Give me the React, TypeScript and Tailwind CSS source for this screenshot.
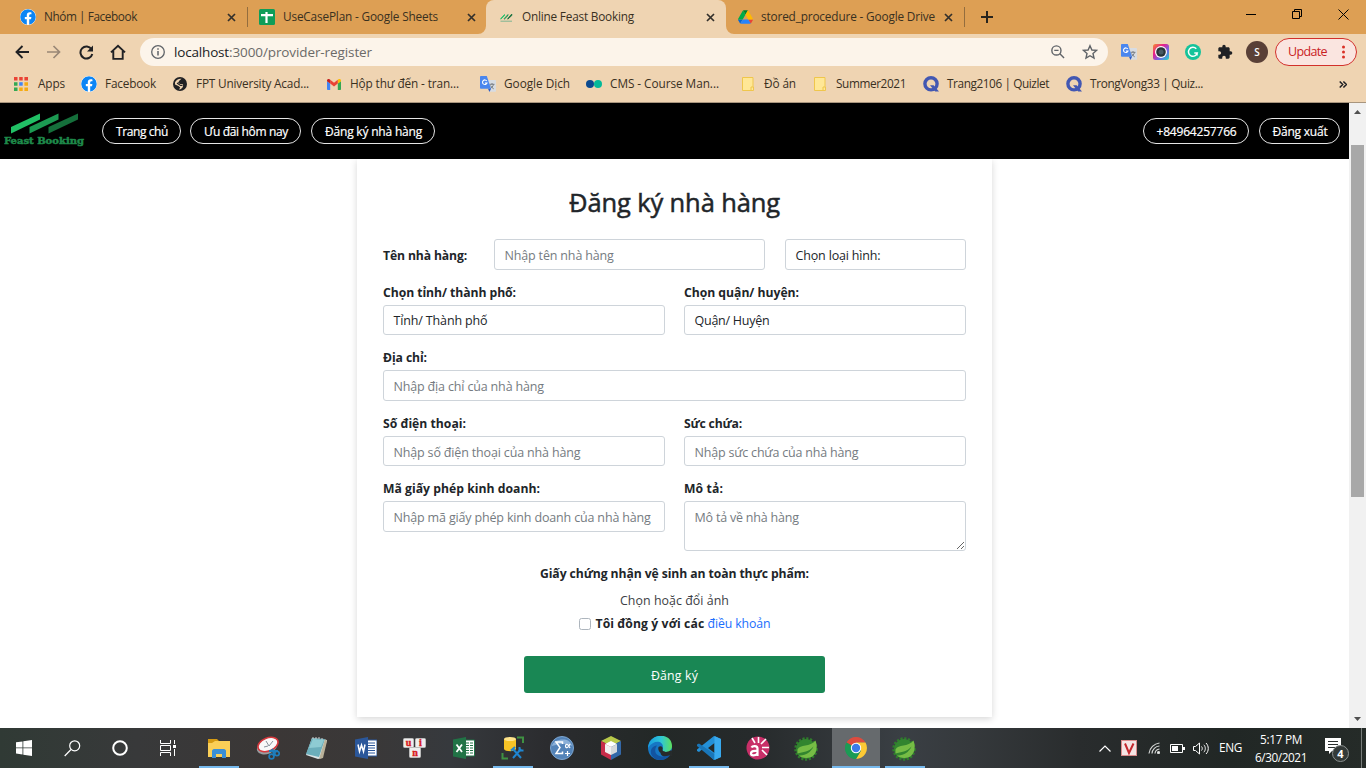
import React, { useLayoutEffect, useRef, useState } from "react";
import { FaFacebook } from "react-icons/fa";

/* Text run whose tracking is adjusted so that it occupies a given width. */
function Fit({ w, className = "", children }: { w: number; className?: string; children: string }) {
  const ref = useRef<HTMLSpanElement>(null);
  const [spacing, setSpacing] = useState(0);
  useLayoutEffect(() => {
    if (ref.current) {
      const natural = ref.current.getBoundingClientRect().width;
      setSpacing((w - natural) / children.length);
    }
  }, [w, children]);
  return (
    <span ref={ref} className={"inline-block shrink-0 whitespace-pre " + className} style={{ letterSpacing: spacing }}>
      {children}
    </span>
  );
}

/* ---------- small icons ---------- */
const FbIcon = () => (
  <span className="flex size-4 items-center justify-center overflow-hidden rounded-full bg-white">
    <FaFacebook className="size-4 text-[#0c85f5]" />
  </span>
);
const SheetsIcon = () => (
  <svg className="size-4" viewBox="0 0 16 16">
    <rect width="16" height="16" rx="1.5" fill="#0f9d58" />
    <path d="M2 5h12v2.2H8.6V14H6.4V7.200H2zM6.400 3h2.200v3H6.400z" fill="#fff" />
  </svg>
);
const FeastIcon = () => (
  <svg className="h-[9px] w-[13px]" viewBox="0 0 13 9">
    <path d="M.8 5.500L4.500 1.500v1L.8 6.200z" fill="#22c069" stroke="#22c069" strokeWidth=".8" />
    <path d="M4.300 5.500l3.700-4v1L4.300 6.200z" fill="#1b9853" stroke="#1b9853" strokeWidth=".8" />
    <path d="M7.800 5.500l4-4.500v1.500l-4 3.700z" fill="#14703e" stroke="#14703e" strokeWidth=".8" />
    <path d="M.5 8.200h11.500" stroke="#7db491" strokeWidth="1" />
  </svg>
);
const DriveIcon = () => (
  <svg className="h-[14px] w-[15px]" viewBox="0 0 87.300 78">
    <path d="M6.600 66.850l3.850 6.650c.8 1.400 1.950 2.500 3.300 3.300L27.500 53H0c0 1.550.4 3.100 1.200 4.500z" fill="#0066da" />
    <path d="M43.650 25L29.900 1.200c-1.350.8-2.500 1.900-3.300 3.300l-25.400 44A9.060 9.060 0 000 53h27.500z" fill="#00ac47" />
    <path d="M73.550 76.800c1.350-.8 2.500-1.900 3.300-3.300l1.600-2.750 7.650-13.250c.8-1.400 1.200-2.950 1.200-4.500H59.800l5.850 11.500z" fill="#ea4335" />
    <path d="M43.650 25L57.400 1.200C56.050.4 54.500 0 52.900 0H34.400c-1.600 0-3.150.45-4.500 1.200z" fill="#00832d" />
    <path d="M59.800 53H27.500L13.750 76.800c1.350.8 2.900 1.200 4.500 1.200h50.800c1.600 0 3.150-.45 4.500-1.200z" fill="#2684fc" />
    <path d="M73.400 26.500l-12.700-22c-.8-1.400-1.950-2.500-3.300-3.300L43.650 25l16.150 28h27.450c0-1.550-.4-3.100-1.200-4.500z" fill="#ffba00" />
  </svg>
);
const CloseX = () => (
  <svg className="size-[9px]" viewBox="0 0 9 9">
    <path d="M1 1l7 7M8 1L1 8" stroke="#33302b" strokeWidth="1.700" />
  </svg>
);
const AppsIcon = () => (
  <svg className="size-[14px]" viewBox="0 0 14 14">
    <path fill="#ea4335" d="M0 0h3.500v3.500H0zM5.200 0h3.500v3.500H5.200zM10.400 0H14v3.500h-3.600z" />
    <path fill="#34a853" d="M0 5.200h3.500v3.500H0zM0 10.400h3.500V14H0z" />
    <path fill="#4285f4" d="M5.200 5.200h3.500v3.500H5.200z" />
    <path fill="#f6ab12" d="M10.400 5.200H14v3.500h-3.600zM5.200 10.400h3.500V14H5.200zM10.400 10.400H14V14h-3.600z" />
  </svg>
);
const GlobeIcon = () => (
  <svg className="size-[14px]" viewBox="0 0 14 14">
    <circle cx="7" cy="7" r="7" fill="#202124" />
    <path d="M2 5.500C3 3 5.500 1.500 8.500 1.800L6.500 3.500 5 5.800 7 7l3 .3c.5 2-.5 4-2.500 5L6 12.500l1.200-2L5.500 9 2 7.500z" fill="#efd4b2" />
    <path d="M4 6l3.500 2.500 2-.2M9 2.500l1.500 2.300 1.500.2" stroke="#202124" strokeWidth="1.200" fill="none" />
  </svg>
);
const GmailIcon = () => (
  <svg className="h-[11px] w-[14px]" viewBox="0 0 14 11">
    <path d="M0 2v8.200c0 .5.400.8.800.8h2.400V4.500z" fill="#4285f4" />
    <path d="M10.800 11h2.400c.5 0 .8-.4.8-.8V2l-3.200 2.500z" fill="#34a853" />
    <path d="M10.800.8v3.800L14 2.200V1.500C14 .2 12.500-.4 11.500.3z" fill="#fbbc04" />
    <path d="M3.200 4.600V.8L7 3.700 10.800.8v3.800L7 7.500z" fill="#ea4335" />
    <path d="M0 1.500v.7l3.200 2.400V.8L2.500.3C1.500-.4 0 .2 0 1.500z" fill="#c5221f" />
  </svg>
);
const TranslateIcon = () => (
  <svg className="size-4" viewBox="0 0 16 16">
    <path d="M6 4h9.200c.5 0 .8.300.8.800V15c0 .5-.300.8-.8.800H9.500z" fill="#d8dce2" />
    <path d="M9.500 8.300h5M12 7v1.300M13.500 8.500c-.6 2-1.800 3.300-3.300 4.300M10.500 9.500c.7 1.500 1.800 2.500 3.200 3.300" stroke="#70757a" strokeWidth=".9" fill="none" />
    <path d="M.8 0h6L11 12.800H.8c-.5 0-.8-.3-.8-.8V.8C0 .3.300 0 .8 0z" fill="#4a86ee" />
    <path d="M8 12.800h3L9.500 16z" fill="#2d5bc7" />
    <path d="M6.800 5A2.300 2.300 0 107 7H4.900" stroke="#fff" strokeWidth="1.100" fill="none" />
  </svg>
);
const CmsIcon = () => (
  <svg className="h-[8px] w-4" viewBox="0 0 16 8">
    <circle cx="4" cy="4" r="4" fill="#0b4a8f" />
    <circle cx="12" cy="4" r="4" fill="#04b99a" />
  </svg>
);
const NoteIcon = () => (
  <svg className="h-[14px] w-3" viewBox="0 0 12 14">
    <path d="M.5.5h10.500v9l.5.5v3.500H.5z" fill="#ffe796" stroke="#efc64c" />
    <path d="M9 13.500V10h2.500" fill="none" stroke="#efc64c" />
  </svg>
);
const QuizletIcon = () => (
  <svg className="size-4" viewBox="0 0 16 16">
    <circle cx="8" cy="7.800" r="6.100" fill="none" stroke="#4257b2" strokeWidth="3.400" />
    <path d="M7 9.200h3.600L16 15.600h-3.800z" fill="#4257b2" />
  </svg>
);

/* ---------- browser frame ---------- */
function Tab({ icon, label, w, box, pad, active = false, end = 9 }: { icon: React.ReactNode; label: string; w: number; box: string; pad: string; active?: boolean; end?: number }) {
  return (
    <div className={"relative flex h-full items-center " + box + " " + pad + (active ? " rounded-t-lg bg-[#efd4b2]" : "")}>
      {active && (
        <>
          <svg className="absolute bottom-0 -left-2 size-2" viewBox="0 0 8 8"><path d="M8 0v8H0a8 8 0 008-8z" fill="#efd4b2" /></svg>
          <svg className="absolute -right-2 bottom-0 size-2" viewBox="0 0 8 8"><path d="M0 0v8h8a8 8 0 01-8-8z" fill="#efd4b2" /></svg>
        </>
      )}
      <span className="flex w-4 justify-center">{icon}</span>
      <Fit w={w} className="ml-2 text-[11.800px] text-[#39301f]">{label}</Fit>
      <span className={"ml-auto " + (end === 9 ? "pr-[11px]" : "pr-[10px]")}><CloseX /></span>
    </div>
  );
}

function TabStrip() {
  return (
    <div className="flex h-[34px] items-center bg-[#dd9f54]">
      <Tab icon={<FbIcon />} label="Nhóm | Facebook" w={93} box="w-[247px]" pad="pl-5" />
      <div className="h-5 w-px bg-[#936d3e]" />
      <Tab icon={<SheetsIcon />} label="UseCasePlan - Google Sheets" w={155} box="w-[238px]" pad="pl-[11px]" end={10} />
      <Tab icon={<FeastIcon />} label="Online Feast Booking" w={112} box="w-[240px]" pad="pl-3" active />
      <Tab icon={<DriveIcon />} label="stored_procedure - Google Drive" w={174} box="w-[238px]" pad="pl-[11px]" />
      <div className="h-5 w-px bg-[#936d3e]" />
      <svg className="ml-4 size-3" viewBox="0 0 12 12"><path d="M6 0v12M0 6h12" stroke="#28241d" strokeWidth="2" /></svg>
      <div className="mb-[6px] ml-auto flex items-center pr-[17px]">
        <svg className="mr-9 h-px w-[10px]"><rect width="10" height="1" /></svg>
        <svg className="mr-9 size-[10px]" viewBox="0 0 10 10" fill="none" stroke="#000"><path d="M.5 2.500h7v7h-7zM2.500 2.500v-2h7v7h-2" /></svg>
        <svg className="size-[11px]" viewBox="0 0 11 11"><path d="M.5.5l10 10M10.500.5l-10 10" stroke="#000" /></svg>
      </div>
    </div>
  );
}

function Toolbar() {
  return (
    <div className="flex h-[36px] items-center bg-[#efd4b2] pl-[15px]">
      <svg className="mr-[18px] size-[14px]" viewBox="0 0 14 14" fill="none" stroke="#202124" strokeWidth="1.900"><path d="M14 7H1.500M7.500 1L1.500 7l6 6" /></svg>
      <svg className="mr-[18px] size-[14px]" viewBox="0 0 14 14" fill="none" stroke="#998776" strokeWidth="1.700"><path d="M0 7h12.500M6.500 1l6 6-6 6" /></svg>
      <svg className="mr-4 size-[15px]" viewBox="0 0 15 15"><path d="M12.500 4.200A6 6 0 1013.300 9" fill="none" stroke="#202124" strokeWidth="2" /><path d="M14 .5v6H8z" fill="#202124" /></svg>
      <svg className="size-4" viewBox="0 0 16 16"><path d="M1 8.400L8 1.700l7 6.700M3.300 7v7.900h9.400V7" fill="none" stroke="#202124" strokeWidth="1.900" /></svg>
      <div className="ml-[14px] flex h-7 w-[968px] items-center rounded-full bg-[#fcf4ea] pl-[11px]">
        <svg className="size-[14px]" viewBox="0 0 14 14"><circle cx="7" cy="7" r="6.300" fill="none" stroke="#5f6368" strokeWidth="1.300" /><path d="M7 6v4.500M7 3.300v1.500" stroke="#5f6368" strokeWidth="1.500" /></svg>
        <Fit w={55} className="ml-[9px] text-[13.500px] text-[#202124]">localhost</Fit>
        <Fit w={143} className="text-[13.500px] text-[#6b6a68]">:3000/provider-register</Fit>
        <svg className="ml-auto size-[14px]" viewBox="0 0 15 15" fill="none" stroke="#5f6368" strokeWidth="1.500"><circle cx="5.800" cy="5.800" r="4.900" /><path d="M9.500 9.500l4.500 4.500M3.500 5.800h4.600" /></svg>
        <svg className="mr-[10px] ml-[17px] size-4" viewBox="0 0 16 16"><path d="M8 1.700l1.900 4.300 4.600.4-3.500 3.100 1 4.600-4-2.400-4 2.400 1-4.600-3.500-3.100 4.600-.4z" fill="none" stroke="#5f6368" strokeWidth="1.400" /></svg>
      </div>
      <div className="ml-[13px] flex items-center">
        <TranslateIcon />
        <svg className="ml-4 size-4" viewBox="0 0 16 16">
          <defs><linearGradient id="cam" x1="0" y1="0" x2="1" y2="1"><stop offset="0" stopColor="#f6902a" /><stop offset=".35" stopColor="#e91e8c" /><stop offset=".65" stopColor="#7166e8" /><stop offset="1" stopColor="#1de0c5" /></linearGradient></defs>
          <rect width="16" height="16" rx="2.500" fill="url(#cam)" /><circle cx="8" cy="8" r="6" fill="#fff" /><circle cx="8" cy="8" r="4.800" fill="#29343a" /><circle cx="8" cy="8" r="2.500" fill="#475962" />
        </svg>
        <svg className="ml-4 size-4" viewBox="0 0 16 16"><circle cx="8" cy="8" r="8" fill="#15c39a" /><path d="M11.300 4.800A4.500 4.500 0 1012.300 9H9.300M12 8.400v3" fill="none" stroke="#fff" strokeWidth="1.500" /></svg>
        <svg className="ml-4 size-4" viewBox="0 0 24 24" fill="#202124"><path d="M20.500 11H19V7c0-1.100-.9-2-2-2h-4V3.500a2.500 2.500 0 00-5 0V5H4c-1.100 0-2 .9-2 2v3.800h1.500a2.700 2.700 0 010 5.400H2V20c0 1.100.9 2 2 2h3.800v-1.500a2.700 2.700 0 015.400 0V22H17c1.100 0 2-.9 2-2v-4h1.500a2.500 2.500 0 000-5z" /></svg>
        <span className="ml-[13px] flex size-[22px] items-center justify-center rounded-full bg-[#5a4037] text-[10px] font-semibold text-white">S</span>
        <div className="ml-[7px] flex h-7 w-[82px] items-center rounded-full border border-[#d2302b] bg-[#fae5e0] pl-3">
          <Fit w={39} className="text-[12.500px] text-[#c9221f]">Update</Fit>
          <svg className="ml-[15px] h-[14px] w-[3px]" viewBox="0 0 3 14" fill="#d93025"><circle cx="1.500" cy="2" r="1.500" /><circle cx="1.500" cy="7" r="1.500" /><circle cx="1.500" cy="12" r="1.500" /></svg>
        </div>
      </div>
    </div>
  );
}

const bookmarks = [
  { box: "w-[67px]", gap: "w-6", w: 27, icon: <AppsIcon />, label: "Apps" },
  { box: "w-[92px]", gap: "w-6", w: 51, icon: <FbIcon />, label: "Facebook" },
  { box: "w-[154px]", gap: "w-[23px]", w: 113, icon: <GlobeIcon />, label: "FPT University Acad..." },
  { box: "w-[153px]", gap: "w-[23px]", w: 109, icon: <GmailIcon />, label: "Hộp thư đến - tran..." },
  { box: "w-[106px]", gap: "w-6", w: 66, icon: <TranslateIcon />, label: "Google Dịch" },
  { box: "w-[156px]", gap: "w-6", w: 109, icon: <CmsIcon />, label: "CMS - Course Man..." },
  { box: "w-[72px]", gap: "w-[22px]", w: 32, icon: <NoteIcon />, label: "Đồ án" },
  { box: "w-[109px]", gap: "w-[22px]", w: 70, icon: <NoteIcon />, label: "Summer2021" },
  { box: "w-[143px]", gap: "w-6", w: 102, icon: <QuizletIcon />, label: "Trang2106 | Quizlet" },
  { box: "w-[150px]", gap: "w-6", w: 113, icon: <QuizletIcon />, label: "TrongVong33 | Quiz..." },
];

function Bookmarks() {
  return (
    <div className="flex h-[33px] items-center border-b border-[#a8957e] bg-[#efd4b2] pb-[4px] pl-[15px]">
      {bookmarks.map((b, i) => (
        <div key={b.label} className={"flex shrink-0 items-center " + b.box + (i === 0 ? " -ml-px" : "")}>
          <span className={"shrink-0 " + b.gap}>{b.icon}</span>
          <Fit w={b.w} className="text-[11.800px] text-[#39301f]">{b.label}</Fit>
        </div>
      ))}
      <svg className="mr-[19px] ml-auto h-[7px] w-2" viewBox="0 0 8 7"><path d="M.7.5l3 3-3 3M4.400.5l3 3-3 3" fill="none" stroke="#202124" strokeWidth="1.500" /></svg>
    </div>
  );
}

/* ---------- site ---------- */
function Pill({ box, w, children }: { box: string; w: number; children: string }) {
  return (
    <button className={"flex h-[26px] items-center justify-center rounded-full border border-[#e6e6e6] pt-[2px] pl-px text-[12px] font-medium text-white [-webkit-text-stroke:0.2px_#fff] " + box}>
      <Fit w={w}>{children}</Fit>
    </button>
  );
}

function SiteHeader() {
  return (
    <header className="flex h-14 items-center bg-black pr-[9px] pl-1">
      <svg className="mr-[17px] h-9 w-[81px]" viewBox="0 0 81 36">
        <path d="M7 14L36 .5v6L7 20.500z" fill="#21c065" />
        <path d="M25.500 14L54.500.5v6l-29 14z" fill="#1c9a52" />
        <path d="M44.500 14L74 .5v6L44.500 20.500z" fill="#156f3b" />
        <text x="0" y="31" textLength="80" lengthAdjust="spacingAndGlyphs" fill="#1e8a4a" stroke="#1e8a4a" strokeWidth=".5" fontSize="9.300" fontWeight="700" fontFamily="DejaVu Serif, serif">Feast Booking</text>
      </svg>
      <nav className="flex">
        <Pill box="w-[79px] mr-[9px]" w={52}>Trang chủ</Pill>
        <Pill box="w-[111px] mr-[10px]" w={84}>Ưu đãi hôm nay</Pill>
        <Pill box="w-[124px]" w={97}>Đăng ký nhà hàng</Pill>
      </nav>
      <div className="ml-auto flex gap-[10px]">
        <Pill box="w-[106px]" w={80}>+84964257766</Pill>
        <Pill box="w-[81px]" w={55}>Đăng xuất</Pill>
      </div>
    </header>
  );
}

const field = "block w-full rounded-[3px] border border-[#ced4da] bg-white px-[9.500px] text-[12.500px] text-[#212529] placeholder:text-[#757b81] outline-none ";

function Label({ w, children }: { w: number; children: string }) {
  return <div className="mb-1 flex h-[18px] items-center pt-[2px]"><Fit w={w} className="text-[12.200px] font-bold">{children}</Fit></div>;
}
function Choice({ w, h, children }: { w: number; h: string; children: string }) {
  return <div className={field + "flex items-center " + h}><Fit w={w}>{children}</Fit></div>;
}

function RegisterForm() {
  return (
    <form className="mx-auto h-[558px] w-[635px] bg-white px-[26px] pt-6 text-[#212529] shadow-[0_2px_7px_rgba(0,0,0,0.16)]">
      <h1 className="mb-[18px] flex h-[38px] items-center justify-center text-[25.500px] font-medium [-webkit-text-stroke:0.5px_#212529]"><Fit w={211}>Đăng ký nhà hàng</Fit></h1>
      <div className="mb-[13px] flex items-center">
        <div className="mb-[2px] w-[111px]"><Fit w={84} className="text-[12.200px] font-bold">Tên nhà hàng:</Fit></div>
        <div className="mr-5 w-[271px]"><input className={field + "h-[31px] pt-[2px] tracking-[-0.160px]"} placeholder="Nhập tên nhà hàng" /></div>
        <div className="w-[181px]"><Choice w={85} h="h-[31px] pt-[3px]">Chọn loại hình:</Choice></div>
      </div>
      <div className="mb-[13px] grid grid-cols-2 gap-[19px]">
        <div><Label w={133}>Chọn tỉnh/ thành phố:</Label><Choice w={94} h="h-[30px] pt-[2px]">Tỉnh/ Thành phố</Choice></div>
        <div><Label w={115}>Chọn quận/ huyện:</Label><Choice w={75} h="h-[30px] pt-[2px]">Quận/ Huyện</Choice></div>
      </div>
      <div className="mb-[13px]">
        <Label w={44}>Địa chỉ:</Label>
        <input className={field + "h-[31px] pt-[2px] tracking-[-0.160px]"} placeholder="Nhập địa chỉ của nhà hàng" />
      </div>
      <div className="mb-[13px] grid grid-cols-2 gap-[19px]">
        <div><Label w={83}>Số điện thoại:</Label><input className={field + "h-[30px] pt-[3px] tracking-[-0.160px]"} placeholder="Nhập số điện thoại của nhà hàng" /></div>
        <div><Label w={58}>Sức chứa:</Label><input className={field + "h-[30px] pt-[3px] tracking-[-0.200px]"} placeholder="Nhập sức chứa của nhà hàng" /></div>
      </div>
      <div className="mb-[13px] grid grid-cols-2 gap-[19px]">
        <div><Label w={157}>Mã giấy phép kinh doanh:</Label><input className={field + "h-[31px] pt-[2px] tracking-[-0.160px]"} placeholder="Nhập mã giấy phép kinh doanh của nhà hàng" /></div>
        <div><Label w={39}>Mô tả:</Label><textarea className={field + "h-[50px] resize pt-[7px] tracking-[-0.200px]"} placeholder="Mô tả về nhà hàng" /></div>
      </div>
      <div className="flex h-[18px] items-center justify-center pt-[2px]"><Fit w={269} className="text-[12.200px] font-bold">Giấy chứng nhận vệ sinh an toàn thực phẩm:</Fit></div>
      <div className="mt-[9px] flex h-[18px] items-center justify-center pt-[2px] text-[#3c4045]"><Fit w={109} className="text-[12.400px]">Chọn hoặc đổi ảnh</Fit></div>
      <div className="mt-[5px] mb-6 flex h-[18px] items-center justify-center pt-[2px]">
        <span className="mr-[5px] mb-px size-3 rounded-[2.500px] border border-[#adb5bd] bg-white" />
        <Fit w={112} className="text-[12.200px] font-bold">Tôi đồng ý với các </Fit>
        <Fit w={63} className="text-[12.300px] text-[#1a6dfd]">điều khoản</Fit>
      </div>
      <button type="button" className="mx-auto flex h-[37px] w-[301px] items-center justify-center rounded-[3px] bg-[#198754] pt-[3px] text-[12.300px] text-white"><Fit w={47}>Đăng ký</Fit></button>
    </form>
  );
}

function Scrollbar() {
  return (
    <div className="flex w-[17px] flex-col items-center bg-[#f1f1f1] pt-[7px] pb-[7px]">
      <svg className="h-1 w-[7px]" viewBox="0 0 7 4"><path d="M0 4L3.500 0 7 4z" fill="#505050" /></svg>
      <div className="mt-[31px] h-[352px] w-[13px] bg-[#a8a8a8]" />
      <svg className="mt-auto h-1 w-[7px]" viewBox="0 0 7 4"><path d="M0 0h7L3.500 4z" fill="#505050" /></svg>
    </div>
  );
}

/* ---------- taskbar ---------- */
const SpringIcon = () => (
  <svg className="size-[25px]" viewBox="0 0 25 25">
    <circle cx="12" cy="13" r="10.500" fill="none" stroke="#2f7d2c" strokeWidth="2.500" strokeDasharray="2.200 1.600" />
    <circle cx="12" cy="13" r="10" fill="#32852f" />
    <path d="M3.500 13.500C6 8 16 11.500 21.500 4.500c3 8 .5 17.500-9 17.500-3.500 0-6-1-7.500-2.500 6.500.5 12-3.500 14.500-9C15 16 9 16 3.500 17.500z" fill="#76bc45" />
  </svg>
);
const apps: { name: string; state?: string; icon: React.ReactNode }[] = [
  { name: "files", state: "open", icon: <svg className="h-[19px] w-[22px]" viewBox="0 0 22 19"><path d="M0 0h9l2 2h11v4H0z" fill="#d69b13" /><path d="M0 4h4l3-2h15v16H0z" fill="#fbcf57" /><path d="M4 19v-7c0-1 1-2 2-2h10c1 0 2 1 2 2v7h-4v-4H8v4z" fill="#3b8fd6" /></svg> },
  { name: "snip", icon: <svg className="size-6" viewBox="0 0 24 24"><ellipse cx="11" cy="11" rx="10.500" ry="7" fill="#989da0" transform="rotate(-22 11 11)" /><ellipse cx="12" cy="8.500" rx="10.500" ry="6.500" fill="#f8f8f8" stroke="#d6383d" strokeWidth="1.600" transform="rotate(-22 12 8.500)" /><path d="M10 5l3 5 4-5M12 10l-4 1" stroke="#87919a" fill="none" /><path d="M13 15l9 0M16 13l3 7" stroke="#1f7dbc" strokeWidth="2" /><circle cx="15.500" cy="20.500" r="2.400" fill="none" stroke="#1f7dbc" strokeWidth="1.700" /><circle cx="21" cy="17.500" r="2.200" fill="none" stroke="#1f7dbc" strokeWidth="1.700" /></svg> },
  { name: "notepad", icon: <svg className="size-6" viewBox="0 0 24 24"><path d="M7 2l15 2-5 18-4 1L1 19z" fill="#d9e3e6" /><path d="M7 2l13 1-6 18L1 18z" fill="#6baebb" /><path d="M8 3l11 1-3 7-12 1z" fill="#8ecbd3" /><path d="M20 3l2 2-4 17-4 1z" fill="#b9b199" /><path d="M8 1v2M11 1v2M14 1v2M17 2v2" stroke="#ccc" /></svg> },
  { name: "word", icon: <svg className="size-[22px]" viewBox="0 0 22 22"><path d="M11 3h11v16H11z" fill="#fff" stroke="#2b579a" /><path d="M13 6h7M13 8.500h7M13 11h7M13 13.500h7M13 16h7" stroke="#2b579a" /><path d="M0 2.500L13 0v22L0 19.500z" fill="#2b579a" /><path d="M3 7.500l1.500 7 2-6.500 2 6.500 1.500-7" fill="none" stroke="#fff" strokeWidth="1.500" /></svg> },
  { name: "unikey", icon: <svg className="h-5 w-6" viewBox="0 0 24 20"><g fill="#eee" stroke="#bbb"><rect x=".5" y=".5" width="10" height="9" rx="1" /><rect x="12.500" y=".5" width="10" height="9" rx="1" /><rect x="6.500" y="9.500" width="11" height="10" rx="1" /></g><g fill="#d71920" stroke="#d71920" strokeWidth=".4" fontFamily="Liberation Serif, serif" fontWeight="700" fontSize="10" textAnchor="middle"><text x="5.500" y="7.500">u</text><text x="17.500" y="8">i</text><text x="12" y="17.500">n</text></g></svg> },
  { name: "excel", icon: <svg className="size-[22px]" viewBox="0 0 22 22"><path d="M11 3h10.500v16H11z" fill="#fff" stroke="#217346" /><path d="M13 6h7M13 8.500h7M13 11h7M13 13.500h7M13 16h7" stroke="#217346" strokeWidth="1.200" /><path d="M16.500 4v14" stroke="#fff" /><path d="M0 2.500L13 0v22L0 19.500z" fill="#217346" /><path d="M3.500 7.500l5.500 7.500M9 7.500L3.500 15" stroke="#fff" strokeWidth="1.800" /></svg> },
  { name: "database", state: "open", icon: <svg className="size-6" viewBox="0 0 24 24"><path d="M16 1.500h6V7M1.500 17v5.500H7" fill="none" stroke="#3f9142" strokeWidth="2" /><path d="M3 3v10c1 3 11 3 12 0V3z" fill="#f7c325" /><ellipse cx="9" cy="3" rx="6" ry="2" fill="#ffe48a" /><path d="M12 13l8 9M20 13l-8 9" stroke="#1f86d1" strokeWidth="2" /><path d="M10 14.500l4-3.500M18.500 11v3.500h4" fill="none" stroke="#1f86d1" strokeWidth="2" /></svg> },
  { name: "math", icon: <svg className="size-6" viewBox="0 0 24 24"><circle cx="12" cy="12" r="11.500" fill="#5383b8" stroke="#7da6d0" /><path d="M2 10C3 3 20 0 22 10c-7-3-13-2-20 0z" fill="#8bb0d8" /><path d="M12.500 8V6H6l4 5.500L6 17.500h6.500v-2" fill="none" stroke="#fff" strokeWidth="1.500" /><path d="M20 8c-2 5-4.500 4-4.500 2s2.500-3 4.500 2M17.500 15v5M15 17.500h5" fill="none" stroke="#fff" strokeWidth="1.200" /></svg> },
  { name: "cube", icon: <svg className="size-6" viewBox="0 0 24 24"><path d="M12 0l10 5-10 5L2 5z" fill="#b8c94a" /><path d="M2 5l10 5v14L2 18.500z" fill="#c72c49" /><path d="M22 5l-10 5v14l10-5.500z" fill="#3468a8" /><path d="M12 5l6 3-6 3-6-3z" fill="#fff" /><path d="M6 8l6 3v8l-6-3z" fill="#f0f0f0" /><path d="M18 8l-6 3v8l6-3z" fill="#d7d9db" /></svg> },
  { name: "edge", icon: <svg className="size-6" viewBox="0 0 24 24"><defs><linearGradient id="eg" x1="0" x2="1"><stop offset="0" stopColor="#189ce0" /><stop offset=".55" stopColor="#2fc7d6" /><stop offset="1" stopColor="#5ee05c" /></linearGradient></defs><circle cx="12" cy="12" r="12" fill="#1677c4" /><path d="M15 14.500h9.500V20l-4 .5c-3 1-7 0-8-3z" fill="#272b2c" /><path d="M0 12C1-4 24-4 24 10c0 6-7 7-9 5-1-1 0-2 0-4 0-6-9-8-15 1z" fill="url(#eg)" /><path d="M9 9.500c-5 7 1 14 13 9.500-2 3.500-6 5-10 5C2 24-1 11 9 9.500z" fill="#1254a1" /><path d="M10.500 11c-1 3 1 7 7 7.500l5-1.500v-1.500c-3 1.500-8 .5-8-1.500 1-2-1-5-4-3z" fill="#272b2c" /></svg> },
  { name: "vscode", state: "open", icon: <svg className="size-6" viewBox="0 0 24 24"><path d="M17 0l7 3v18l-7 3L5.500 13 2 16 0 15v-1.500L17 0zM17.500 7L11 12l6.500 5z" fill="#2390d8" fillRule="evenodd" /><path d="M17 24L0 10V8.500L2 7.500 17.500 18z" fill="#1976b9" /><path d="M17.500 0L24 3v18l-6.500 3z" fill="#38a9ee" /></svg> },
  { name: "astah", icon: <svg className="size-6" viewBox="0 0 24 24"><circle cx="12" cy="12" r="11.500" fill="#c82f68" /><path d="M12.500 7V1M15 8l5-5M16 11.500h7M16 14l5 5M9 7L6 2" stroke="#fff" strokeWidth="1.600" /><path d="M5.500 11.500c1-2 6-2 6 1v7.500M11.500 15c-3-.5-6.500 0-6.500 2.500s4 2.500 6.500 0" fill="none" stroke="#fff" strokeWidth="2.200" /></svg> },
  { name: "spring", icon: <SpringIcon /> },
  { name: "chrome", state: "active", icon: <svg className="size-[22px]" viewBox="0 0 22 22"><path d="M11 11L1.500 5.500A11 11 0 0120.500 5.500H11z" fill="#dd4b3e" /><path d="M20.500 5.500A11 11 0 0111 22l5-8.500-5-8z" fill="#fcc934" /><path d="M1.500 5.500A11 11 0 0011 22l4.800-8.300L11 11z" fill="#1b9b55" /><path d="M1.500 5.500l4.700 8.200L11 22C2 22-2 12 1.500 5.500z" fill="#1b9b55" /><circle cx="11" cy="11" r="5.200" fill="#fff" /><circle cx="11" cy="11" r="4.200" fill="#3c7be8" /></svg> },
  { name: "spring-2", state: "open", icon: <SpringIcon /> },
];

function Taskbar() {
  return (
    <footer className="flex h-10 items-stretch bg-[linear-gradient(90deg,#303a35_0%,#38393a_10%,#3b3736_20%,#3a3838_27%,#36393d_33%,#2b2c2f_40%,#232827_48%,#262a2b_55%,#3a3f44_66%,#35393c_71%,#292c2d_79%,#212725_90%,#252b28_100%)]">
      <div className="flex w-12 items-center justify-center"><svg className="size-4" viewBox="0 0 16 16"><path d="M0 2.300L6.500 1.400v6.100H0zM7.300 1.300L16 0v7.500H7.300zM0 8.300h6.500v6.200L0 13.600zM7.300 8.300H16V16l-8.700-1.300z" fill="#fff" /></svg></div>
      <div className="flex w-12 items-center justify-center"><svg className="size-[17px]" viewBox="0 0 17 17"><circle cx="10.700" cy="5.800" r="5" fill="none" stroke="#fff" strokeWidth="1.200" /><path d="M7 9.500L.7 16" stroke="#fff" strokeWidth="1.200" /></svg></div>
      <div className="flex w-12 items-center justify-center"><svg className="size-4" viewBox="0 0 16 16"><circle cx="8" cy="8" r="6.800" fill="none" stroke="#fff" strokeWidth="2" /></svg></div>
      <div className="mr-[2px] flex w-12 items-center justify-center"><svg className="size-4" viewBox="0 0 16 16" fill="none" stroke="#fff"><path d="M.5 0v3.500h10V0M.5 16v-3.500h10V16M.5 5.500h10v5H.5zM14.500 0v4M14.500 9v7" /><path d="M13 6.500h3" strokeWidth="3" /></svg></div>
      {apps.map((a) => (
        <div key={a.name} className="flex w-[49px] flex-col items-center">
          <div className={"flex h-[38px] w-12 items-center justify-center pt-[2px] " + (a.state === "active" ? "bg-[#666a6d]" : "")}>{a.icon}</div>
          {a.state && <div className={"h-[2px] bg-[#76b9ed] " + (a.state === "active" ? "w-12" : "w-10")} />}
        </div>
      ))}
      <div className="ml-auto flex items-center text-white">
        <svg className="mr-[10px] h-[7px] w-3" viewBox="0 0 12 7"><path d="M.5 6.500L6 1l5.500 5.500" fill="none" stroke="#fff" strokeWidth="1.200" /></svg>
        <svg className="mr-[11px] size-4" viewBox="0 0 16 16"><path d="M0 0h16v16H0z" fill="#d98a8a" /><path d="M1 1h14v14H1z" fill="#f5e4e4" /><path d="M4 3.500L8 13l4.500-9.500" fill="none" stroke="#c4282e" strokeWidth="2" /></svg>
        <svg className="mr-[10px] size-3" viewBox="0 0 12 12" fill="none" stroke="#d5d7d6" strokeWidth="1.200"><path d="M1 11.500A12 12 0 0111.500 1" /><path d="M4 11.500A8 8 0 0111.500 4" /><path d="M7 11.500A5 5 0 0111.500 7" /><circle cx="10.500" cy="10.500" r="1" fill="#fff" /></svg>
        <svg className="mr-2 h-[9px] w-[15px]" viewBox="0 0 15 9"><path d="M.5.5h12v8H.5z" fill="none" stroke="#fff" /><path d="M2 2h6v5H2zM13 3h2v3h-2z" fill="#fff" /></svg>
        <svg className="mr-[9px] h-[13px] w-[17px]" viewBox="0 0 17 13" fill="none" stroke="#fff"><path d="M.5 4.500h2L6.500 1v11L2.500 8.500h-2z" /><path d="M8.500 4.500c1 1 1 3 0 4M10.800 2.800c2 2 2 5.400 0 7.400M13 1c3 3 3 8 0 11" /></svg>
        <Fit w={23} className="mr-[13px] text-[11.800px]">ENG</Fit>
        <div className="mr-[18px] flex w-[52px] flex-col items-center text-[11.800px] leading-[18px]">
          <Fit w={42}>5:17 PM</Fit>
          <Fit w={52}>6/30/2021</Fit>
        </div>
        <svg className="mt-[3px] mr-3 h-[26px] w-6" viewBox="0 0 24 26">
          <path d="M0 1h16v13H7l-3 3v-3H0z" fill="#fff" /><path d="M3 4.500h10M3 7.500h10M3 10.500h7" stroke="#2b302e" />
          <circle cx="15.500" cy="16.500" r="8" fill="#343a38" stroke="#8c9190" />
          <text x="15.500" y="20.500" textAnchor="middle" fill="#fff" fontSize="11" fontWeight="700" fontFamily="Open Sans, sans-serif">4</text>
        </svg>
        <div className="mr-1 h-10 w-px bg-[#777c7a]" />
      </div>
    </footer>
  );
}

export default function App() {
  return (
    <div className="flex h-[768px] w-[1366px] flex-col overflow-hidden bg-white font-['Open_Sans','Noto_Sans',sans-serif]">
      <TabStrip />
      <Toolbar />
      <Bookmarks />
      <div className="flex h-[625px]">
        <div className="w-[1349px] overflow-hidden">
          <SiteHeader />
          <RegisterForm />
        </div>
        <Scrollbar />
      </div>
      <Taskbar />
    </div>
  );
}
